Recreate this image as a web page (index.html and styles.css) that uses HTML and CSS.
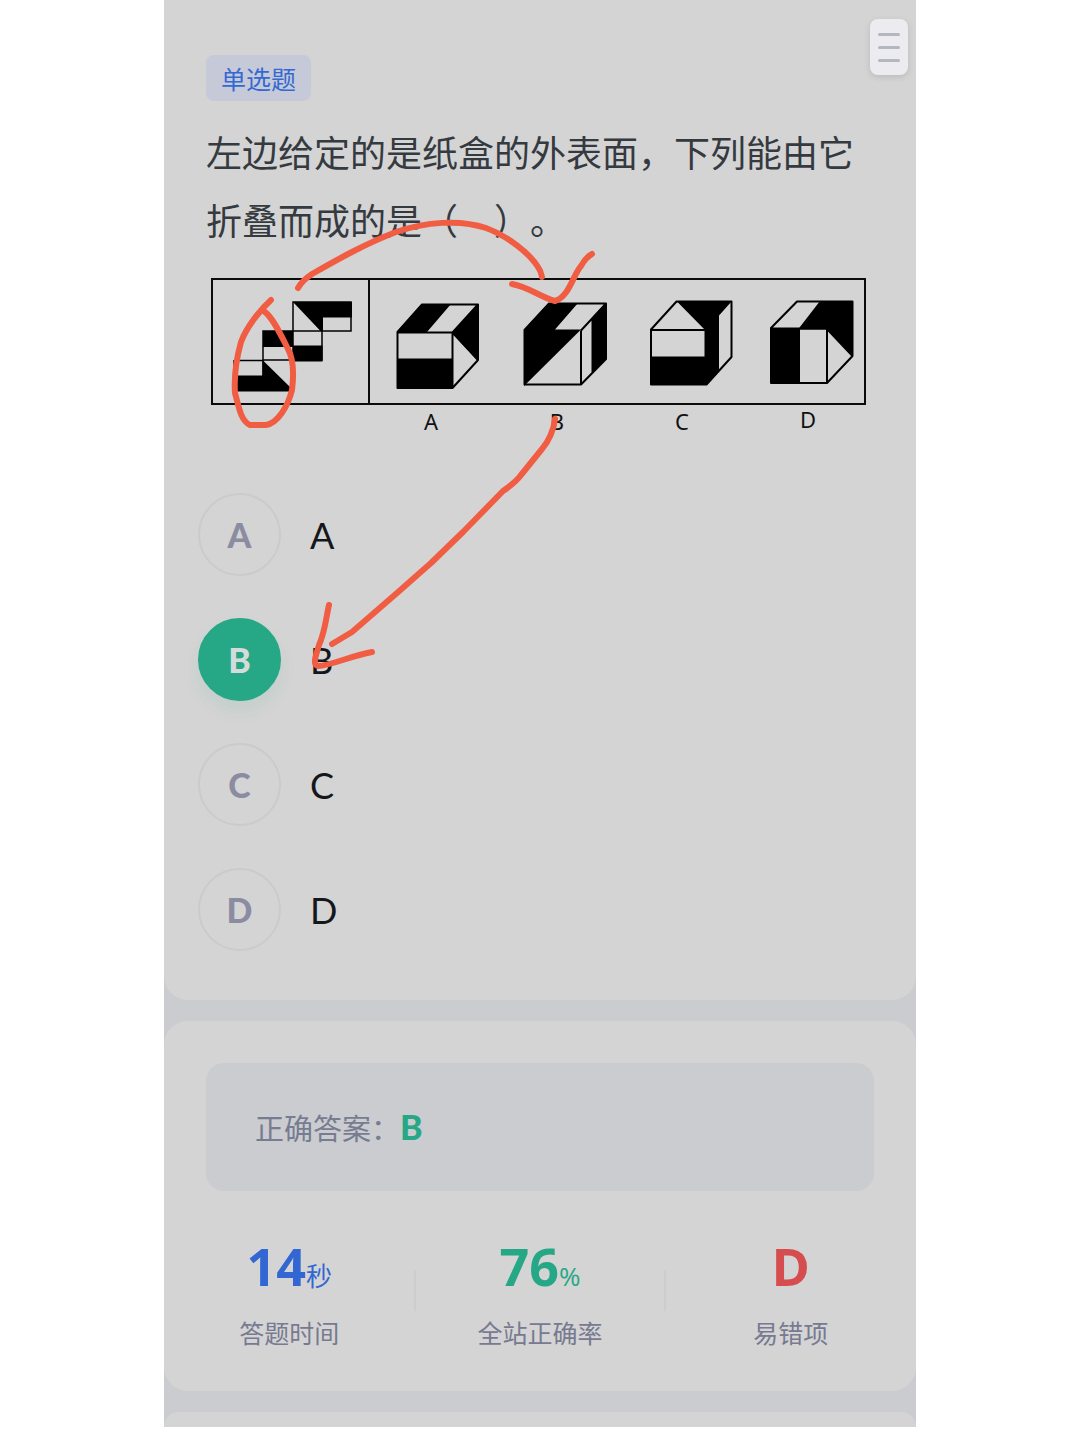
FILE: index.html
```html
<!DOCTYPE html>
<html lang="zh-CN">
<head>
<meta charset="utf-8">
<meta name="viewport" content="width=device-width, initial-scale=1">
<title>单选题</title>
<link rel="stylesheet" href="styles.css">
</head>

<body>

<main class="phone">

	<button type="button" class="menu" aria-label="菜单">
		<span class="menu-line"></span>
		<span class="menu-line"></span>
		<span class="menu-line"></span>
	</button>

	<section class="card question">
		<span class="tag">单选题</span>
		<h1 class="title">左边给定的是纸盒的外表面，下列能由它折叠而成的是（　）。</h1>

		<svg class="figure" viewBox="206 270 668 170" role="img" aria-label="纸盒展开图">
			<!-- frame -->
			<g fill="none" stroke="#0b0b0b" stroke-width="2">
				<rect x="212" y="279" width="653" height="125"/>
				<path d="M369 279V404"/>
			</g>

			<!-- unfolded net -->
			<g stroke="#000" stroke-width="1.5" fill="none">
				<path d="M293 302H351V331H293ZM322 317V331M263 331H293V360H263ZM293 331H322V360H293ZM234 360.5H263M263 360V390M234 360V390"/>
			</g>
			<path d="M293 302H352V317.5H323V331H320.5ZM263 331H293V347H263ZM293 345.5H322.5V361.5H293ZM234 375.5H262.5V360L290 387V391.5H234Z"/>

			<!-- A -->
			<g stroke="#000" stroke-width="2" fill="none" stroke-linejoin="round">
				<path d="M397.5 332L422 304.5H478V360L452.5 388H397.5ZM397.5 332.5H452.5V388M452.5 332.5L478 304.5M452.5 332.5L478 360"/>
			</g>
			<path d="M397 332L422 304H451L427 332ZM397 358.5H452V388H397ZM452 333L478 304V361Z"/>

			<!-- B -->
			<g stroke="#000" stroke-width="2" fill="none" stroke-linejoin="round">
				<path d="M524.5 330L549 303.5H606V359L581 384.5H524.5ZM581 330.5V384.5M581 330.5L606 303.5M592.5 319V372"/>
			</g>
			<path d="M524 330L549 303H578L555 329.5H581L524 386ZM592 318L606 303.5V359L592 373Z"/>

			<!-- C -->
			<g stroke="#000" stroke-width="2" fill="none" stroke-linejoin="round">
				<path d="M651 329.5L676.5 301.5H731.5V357L706.5 384.5H651ZM651 330H705"/>
			</g>
			<path d="M676.5 301H732L719 315.5V370L706.5 385H651V356.5H704.5V329.5Z"/>

			<!-- D -->
			<g stroke="#000" stroke-width="2" fill="none" stroke-linejoin="round">
				<path d="M771 328L797 301.5H852.5V356L827 383H771ZM771 328.5H827M827 329V383M799 328V383M827 329L852.5 356"/>
			</g>
			<path d="M771 328H799V383H771ZM820 301H853V356L827 329.5H798Z"/>

			<g class="figure-label" text-anchor="middle">
				<text x="431" y="430">A</text>
				<text x="557" y="430">B</text>
				<text x="682" y="430">C</text>
				<text x="808" y="428">D</text>
			</g>
		</svg>

		<form class="options">
			<label class="option">
				<input type="radio" name="answer" value="A" class="option-radio">
				<span class="option-key" aria-hidden="true">A</span>
				<span class="option-text">A</span>
			</label>
			<label class="option">
				<input type="radio" name="answer" value="B" class="option-radio" checked>
				<span class="option-key" aria-hidden="true">B</span>
				<span class="option-text">B</span>
			</label>
			<label class="option">
				<input type="radio" name="answer" value="C" class="option-radio">
				<span class="option-key" aria-hidden="true">C</span>
				<span class="option-text">C</span>
			</label>
			<label class="option">
				<input type="radio" name="answer" value="D" class="option-radio">
				<span class="option-key" aria-hidden="true">D</span>
				<span class="option-text">D</span>
			</label>
		</form>
	</section>

	<section class="card result">
		<div class="answer">正确答案：<strong class="answer-key">B</strong></div>

		<div class="stats">
			<div class="stat">
				<div class="stat-value blue">14<span class="unit">秒</span></div>
				<div class="stat-label">答题时间</div>
			</div>
			<div class="stat">
				<div class="stat-value green">76<span class="unit">%</span></div>
				<div class="stat-label">全站正确率</div>
			</div>
			<div class="stat">
				<div class="stat-value red">D</div>
				<div class="stat-label">易错项</div>
			</div>
		</div>
	</section>

	<section class="card next"></section>

	<!-- pen marks drawn over the page -->
	<svg class="marks" viewBox="164 0 752 1427" aria-hidden="true">
		<path d="M298 288C302 281 306 278 312 274C340 258 365 244 396 232C425 222 460 219 486 228C508 236 530 254 538 267Q541 271 542 277"/>
		<path d="M512 284C529 287 540 297 555 301C569 297 573 275 581 266Q586 257 592 254"/>
		<path d="M271 300C261 309 247 326 241 342C236 360 234 378 235 393C239 408 241 421 250 425H266C278 423 288 406 292 390C294 374 294 360 288 349C281 335 273 318 265 312"/>
		<path d="M555 419C554 429 549 441 542 449L521 475Q516 482 503 491L463 532L431 563L397 593L352 632L332 644"/>
		<path d="M329 605C326 618 325 632 319 645C316 656 312 664 318 666C330 666 350 656 372 652"/>
	</svg>

</main>

</body>
</html>
```

FILE: styles.css
```css
* {
	box-sizing: border-box;
}

body {
	margin: 0;
	background: #fff;
	font-family: "Noto Sans CJK SC", sans-serif;
	color: #343a40;
}

.phone {
	position: relative;
	max-width: 752px;
	margin: 0 auto;
	background: #cacccf;
	overflow: hidden;
}

.card {
	background: #d4d4d4;
	border-radius: 24px;
	padding: 42px;
	margin-bottom: 21px;
}

/* floating menu button */
.menu {
	position: absolute;
	top: 19px;
	right: 8px;
	width: 38px;
	height: 56px;
	padding: 0 8px;
	border: 0;
	border-radius: 8px;
	background: #ececf0;
	box-shadow: 0 2px 6px rgba(0, 0, 0, 0.12);
	display: flex;
	flex-direction: column;
	justify-content: center;
	gap: 10px;
}

.menu-line {
	height: 3px;
	border-radius: 2px;
	background: #b4b6c0;
}

/* question */
.question {
	border-radius: 0 0 24px 24px;
	padding-top: 55px;
	padding-bottom: 49px;
}

.tag {
	display: block;
	width: fit-content;
	padding: 0 15px;
	border-radius: 8px;
	background: #c6c9d7;
	color: #3469d4;
	font-size: 25px;
	line-height: 46px;
}

.title {
	margin: 16px -8px 17px 0;
	font-size: 36px;
	font-weight: 400;
	line-height: 68px;
	text-spacing-trim: space-all;
}

.figure {
	display: block;
	width: 100%;
}

.figure-label {
	font-family: "Noto Sans", sans-serif;
	font-size: 22px;
	fill: #111;
}

/* options */
.options {
	display: grid;
	gap: 42px;
	margin: 53px 0 0 -8px;
}

.option {
	display: grid;
	grid-template-columns: 83px 1fr;
	column-gap: 29px;
	align-items: center;
	font-family: Lato, sans-serif;
	font-size: 36px;
	color: #15171a;
}

.option-radio {
	appearance: none;
	grid-area: 1 / 1;
	width: 83px;
	height: 83px;
	margin: 0;
	border: 2px solid #c9cbcc;
	border-radius: 50%;
}

.option-radio:checked {
	border-color: #26a886;
	background: #26a886;
	box-shadow: 0 10px 16px rgba(38, 168, 134, 0.1);
}

.option-key {
	grid-area: 1 / 1;
	z-index: 1;
	text-align: center;
	font-size: 34px;
	font-weight: 900;
	color: #8b8ca1;
}

.option-radio:checked + .option-key {
	color: #d4dcd9;
}

/* result */
.answer {
	padding: 0 49px;
	border-radius: 18px;
	background: #cacccf;
	color: #777c92;
	font-size: 29px;
	line-height: 128px;
}

.answer-key {
	font-family: Lato, sans-serif;
	font-size: 34px;
	font-weight: 900;
	line-height: 1;
	color: #26a886;
}

.stats {
	display: grid;
	grid-template-columns: repeat(3, 1fr);
	margin: 43px -42px -1px;
}

.stat {
	position: relative;
	text-align: center;
}

.stat + .stat::before {
	content: "";
	position: absolute;
	left: -1px;
	top: 36px;
	width: 2px;
	height: 41px;
	background: #cbcdce;
}

.stat-value {
	font-family: "Open Sans", "Noto Sans CJK SC", sans-serif;
	font-size: 52px;
	font-weight: 700;
	line-height: 64px;
	height: 64px;
}

.unit {
	font-size: 26px;
	font-weight: 400;
}

.stat-label {
	margin-top: 16px;
	font-size: 25px;
	line-height: 36px;
	color: #777a90;
}

.blue {
	color: #3267d3;
}

.green {
	color: #26a886;
}

.red {
	color: #d64d4f;
}

/* top edge of the following card */
.next {
	border-radius: 24px 24px 0 0;
	height: 15px;
	padding: 0;
	margin-bottom: 0;
}

.marks {
	position: absolute;
	top: 0;
	left: 0;
	width: 100%;
	pointer-events: none;
	fill: none;
	stroke: #f15d43;
	stroke-width: 6;
	stroke-linecap: round;
	stroke-linejoin: round;
}
```
